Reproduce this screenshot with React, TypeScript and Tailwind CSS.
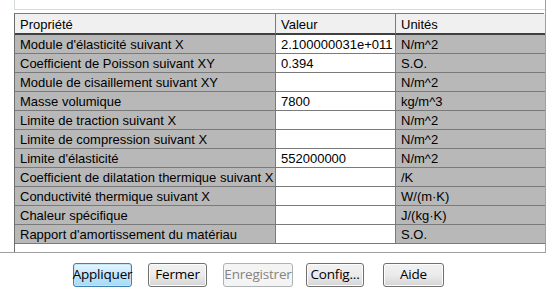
import React from "react";

type Row = { name: string; value: string; unit: string };

const rows: Row[] = [
  { name: "Module d'élasticité suivant X", value: "2.100000031e+011", unit: "N/m^2" },
  { name: "Coefficient de Poisson suivant XY", value: "0.394", unit: "S.O." },
  { name: "Module de cisaillement suivant XY", value: "", unit: "N/m^2" },
  { name: "Masse volumique", value: "7800", unit: "kg/m^3" },
  { name: "Limite de traction suivant X", value: "", unit: "N/m^2" },
  { name: "Limite de compression suivant X", value: "", unit: "N/m^2" },
  { name: "Limite d'élasticité", value: "552000000", unit: "N/m^2" },
  { name: "Coefficient de dilatation thermique suivant X", value: "", unit: "/K" },
  { name: "Conductivité thermique suivant X", value: "", unit: "W/(m·K)" },
  { name: "Chaleur spécifique", value: "", unit: "J/(kg·K)" },
  { name: "Rapport d'amortissement du matériau", value: "", unit: "S.O." },
];

function Btn({ label, kind }: { label: string; kind?: "default" | "disabled" }) {
  let cls =
    "h-[24px] rounded-[3px] border text-[13.5px] tracking-[-0.2px] leading-none flex items-center justify-center whitespace-nowrap ";
  if (kind === "default") {
    cls +=
      "border-[#3c7fb1] bg-gradient-to-b from-[#eaf6fd] via-[#bee6fd] to-[#a7d9f5] text-black shadow-[inset_0_0_0_1px_#c4e5f6]";
  } else if (kind === "disabled") {
    cls += "border-[#adb2b5] bg-[#f4f4f4] text-[#838383]";
  } else {
    cls +=
      "border-[#707070] bg-gradient-to-b from-[#f2f2f2] via-[#ebebeb] to-[#d5d5d5] text-black shadow-[inset_0_0_0_1px_#fcfcfc]";
  }
  return <div className={cls}>{label}</div>;
}

export default function App() {
  return (
    <div className="w-[555px] h-[297px] bg-white overflow-hidden font-['Liberation_Sans',Arial,sans-serif] text-[13px] text-black">
      <div className="w-[546px] h-[253px] border-r border-b border-[#a0a0a0] pl-[14px] flex flex-col">
        <div className="h-[10px] border-l border-b border-[#d4dbe0]" />
        <div className="mt-[3px] flex-1 border-l border-[#6d6d6d] pr-[1px]">
          <div className="grid grid-cols-[261px_120px_149px] border-t border-[#7a7a7a]">
            <div className="h-[21px] bg-[#f0f0f0] border-b-2 border-[#404040] border-r border-r-[#7a7a7a] pl-[5px] pt-[2px] flex items-center">
              Propriété
            </div>
            <div className="h-[21px] bg-[#f0f0f0] border-b-2 border-[#404040] border-r border-r-[#7a7a7a] pl-[5px] pt-[2px] flex items-center">
              Valeur
            </div>
            <div className="h-[21px] bg-[#f0f0f0] border-b-2 border-[#404040] pl-[5px] pt-[2px] flex items-center">
              Unités
            </div>
            {rows.map((r) => (
              <React.Fragment key={r.name}>
                <div className="h-[19px] bg-[#b8b8b8] border-b border-r border-[#7a7a7a] pl-[5px] pt-[1px] flex items-center">
                  {r.name}
                </div>
                <div className="h-[19px] bg-white border-b border-r border-[#7a7a7a] pl-[5px] pt-[1px] flex items-center">
                  {r.value}
                </div>
                <div className="h-[19px] bg-[#b8b8b8] border-b border-[#7a7a7a] pl-[5px] pt-[1px] flex items-center">
                  {r.unit}
                </div>
              </React.Fragment>
            ))}
          </div>
        </div>
      </div>
      <div className="flex pl-[73px] pt-[10px] gap-[16px] font-['Open_Sans','Noto_Sans',sans-serif]">
        <div className="w-[59px]">
          <Btn label="Appliquer" kind="default" />
        </div>
        <div className="w-[59px]">
          <Btn label="Fermer" />
        </div>
        <div className="w-[70px]">
          <Btn label="Enregistrer" kind="disabled" />
        </div>
        <div className="w-[58px] ml-[-3px]">
          <Btn label="Config..." />
        </div>
        <div className="w-[61px] ml-[3px]">
          <Btn label="Aide" />
        </div>
      </div>
    </div>
  );
}
